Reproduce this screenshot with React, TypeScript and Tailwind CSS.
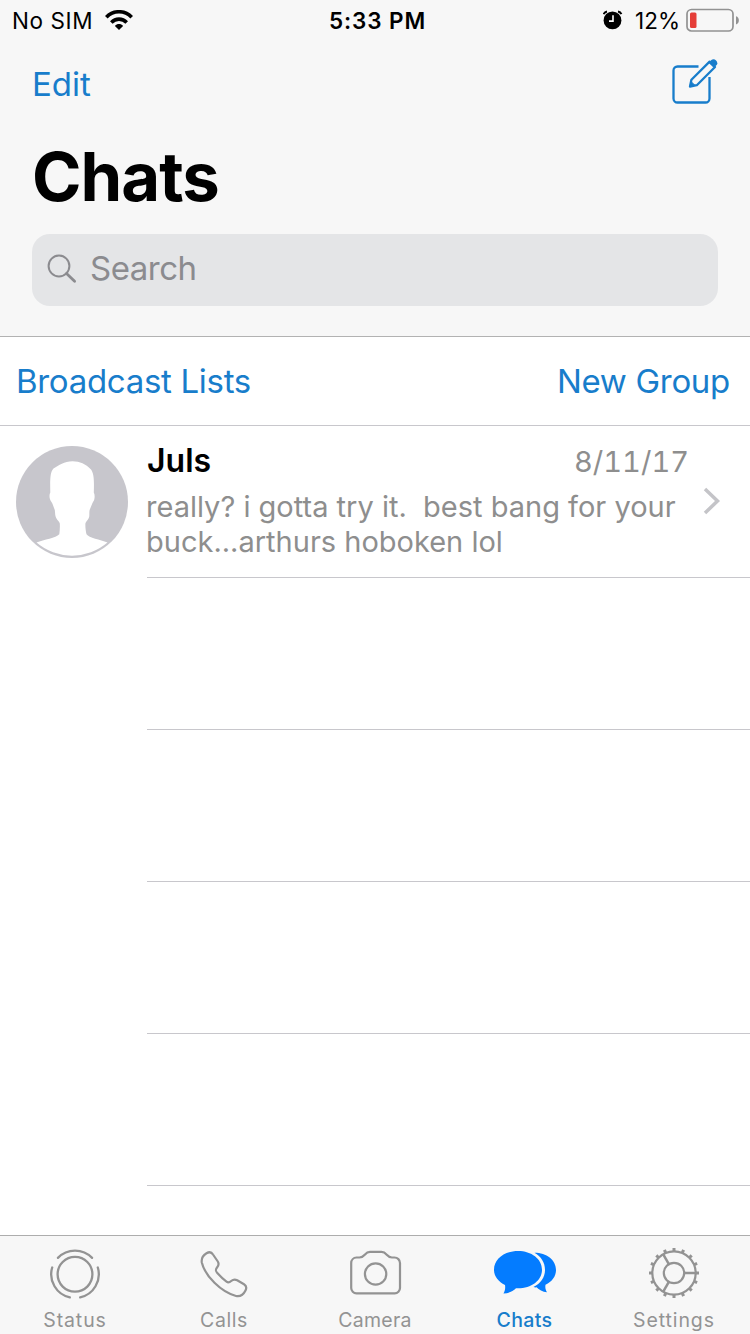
import type { ReactNode } from "react";

const WifiIcon = () => (
    <svg className="w-7 h-5 -mt-px" viewBox="0 0 28 20" fill="none" stroke="black" strokeWidth="3.6">
        <path d="M1.3 7.2C8.3 -0.1 19.7 -0.1 26.7 7.2" />
        <path d="M6.3 12.4C10.6 8 17.4 8 21.7 12.4" />
        <path d="M9.9 15.9C12.2 13.5 15.8 13.5 18.1 15.9L14 20Z" fill="black" stroke="none" />
    </svg>
);

const AlarmIcon = () => (
    <svg className="w-5 h-5 -mt-px" viewBox="0 0 20 20" fill="none">
        <circle cx="9.5" cy="10.4" r="8.9" fill="black" />
        <path d="M10 5.3V11.1H6" stroke="white" strokeWidth="1.6" />
        <path d="M0.6 4.2C1.2 2.8 2.5 1.8 4 1.5M18.4 4.2C17.8 2.8 16.5 1.8 15 1.5" stroke="black" strokeWidth="2" />
    </svg>
);

const BatteryIcon = () => (
    <svg className="w-[54px] h-6 -mt-0.5" viewBox="0 0 54 24" fill="none">
        <rect x="1" y="1.5" width="46" height="21.5" rx="4.5" stroke="#929292" strokeWidth="1.7" />
        <rect x="4" y="4.5" width="6.5" height="15.5" rx="1.5" fill="#e53e38" />
        <path d="M50 8.3C53.8 9.3 53.8 15.5 50 16.5Z" fill="#929292" />
    </svg>
);

const ComposeIcon = () => (
    <svg className="w-[46px] h-[46px]" viewBox="0 0 46 46" fill="none" stroke="#187dcb" strokeWidth="2.3">
        <path d="M26.5 8.5H5.5A4 4 0 0 0 1.5 12.5V40.5A4 4 0 0 0 5.5 44.5H33.5A4 4 0 0 0 37.5 40.5V19" />
        <path d="M18 28.5L19.4 21.8L37.6 3.6L43 9L24.8 27.2Z" strokeLinejoin="round" />
        <path d="M18 28.5L19 23.5L23 27.4Z" fill="#187dcb" strokeWidth="1" />
        <path d="M36.6 4.8L39.4 2C42.3 -0.8 47.2 4.2 44.6 7L41.8 9.8Z" fill="#187dcb" stroke="none" />
    </svg>
);

const SearchIcon = () => (
    <svg className="w-[30px] h-[30px]" viewBox="0 0 30 30" fill="none" stroke="#8b8b8f">
        <circle cx="12" cy="12" r="10.4" strokeWidth="2" />
        <path d="M19.5 19.5L27.6 27.3" strokeWidth="2.8" strokeLinecap="round" />
    </svg>
);

const Avatar = () => (
    <svg className="w-28 h-28 shrink-0" viewBox="0 0 112 112">
        <circle cx="56" cy="56" r="56" fill="#c7c6cc" />
        <path
            d="M56.5 15.3C48 15.3 43 19.5 37.5 22.5C34 26 34 34 34.300 46.5C32.800 49 33.500 54 35.500 56C37 58 37.500 61 38.800 64C39.200 67 39 70 40.200 72C41.500 74.500 43.500 75.500 43.800 77.500C44 81 43.800 85 43.300 88.300C40 92 28 93.500 20.500 96.600A54.700 54.700 0 0 0 91.500 96.600C84 93.500 73 92 70.500 88.300C69.800 85 69.200 81 69.400 77.500C69.800 75.500 71.500 74.500 72.800 72C73.800 70 73 67 73.600 64C75 61 75.800 58 77 56C78.800 54 79.200 49 77.800 46.500C78.200 34 78 28 75 23.500C69.500 18 64 15.300 56.500 15.300Z"
            fill="white"
        />
    </svg>
);

const StatusIcon = () => (
    <svg className="w-[52px] h-[52px]" viewBox="0 0 52 52" fill="none" stroke="currentColor" strokeWidth="2.3" strokeLinecap="round">
        <circle cx="26" cy="26.3" r="17.4" />
        <path d="M8.9 9.9A23.7 23.7 0 0 1 43.1 9.9" />
        <path d="M3.2 19.5A23.7 23.7 0 0 0 20.8 49.4" />
        <path d="M48.8 19.5A23.7 23.7 0 0 1 31.2 49.4" />
    </svg>
);

const CallsIcon = () => (
    <svg className="w-12 h-12 mr-[3px]" viewBox="0 0 48 48" fill="none" stroke="currentColor" strokeWidth="2.2" strokeLinejoin="round">
        <path d="M6.5 3.3C9.5 1.5 11.5 2 13 4.5L17.8 11.5C19.2 13.8 18.8 15.3 17.2 17.2C15.2 19.7 15.4 20.9 17.3 23C20.4 26.5 23 29 26.5 31.6C28.3 32.9 29.5 32.5 31.2 31C33.2 29.3 35 29.1 37.2 30.3L44 34.3C46.5 35.8 47 37.5 45.5 40.5C43.5 44.5 40.5 46.9 36 46C21 42 5 26 1.8 12.5C1.2 8.5 2.8 5.5 6.5 3.3Z" />
    </svg>
);

const CameraIcon = () => (
    <svg className="w-[52px] h-[46px] ml-0.5 mb-0.5" viewBox="0 0 52 46" fill="none" stroke="currentColor" strokeWidth="2.2">
        <path d="M6.5 7.5H9.5C15 7.5 14.5 1.8 20 1.8H31.5C37 1.8 36.5 7.5 42 7.5H44.5A5.5 5.5 0 0 1 50 13V38A5.3 5.3 0 0 1 44.7 43.3H6.5A5.3 5.3 0 0 1 1.2 38V13A5.5 5.5 0 0 1 6.5 7.5Z" />
        <circle cx="25.6" cy="24" r="10.7" />
    </svg>
);

const ChatsIcon = () => (
    <svg className="w-16 h-[46px] mb-[3px]" viewBox="0 0 64 46" fill="#047cff">
        <path d="M25 2C38.5 2 49 10 49 20.7C49 31.5 38.5 39.3 25 39.3H23C20 42.5 15.5 44.3 10.5 44.5C12 42 12.5 39 12 36C5.5 32.8 1 27.5 1 20.7C1 10 11.5 2 25 2Z" />
        <path d="M41.5 3.8C53.5 3.8 63 11 63 21C63 27.5 59 32.5 52.5 35.8C52 38.5 52.5 41 54 43.3C49.5 42.8 46 41 43.5 38.3C42.5 38.5 41.5 38.3 40.5 38C47.5 34.5 52 28.5 52 21C52 13.5 48 7.5 41.5 3.8Z" />
    </svg>
);

const TEETH = Array.from({ length: 16 }, (_, i) => i * 22.5);
const SPOKES = [0, 120, 240];

const SettingsIcon = () => (
    <svg className="w-[52px] h-[52px] mr-0.5 mb-0.5" viewBox="0 0 52 52" fill="none" stroke="currentColor" strokeWidth="2.2">
        <circle cx="26" cy="26" r="21.7" />
        <circle cx="26" cy="26" r="10.2" />
        {SPOKES.map((deg) => (
            <path key={deg} d="M36 26H47.5" strokeWidth="2.5" transform={`rotate(${deg} 26 26)`} />
        ))}
        {TEETH.map((deg) => (
            <path key={deg} d="M48 26H51" strokeWidth="3" transform={`rotate(${deg} 26 26)`} />
        ))}
    </svg>
);

interface TabProps {
    label: string;
    labelClass: string;
    icon: ReactNode;
}

const tabs: TabProps[] = [
    { label: "Status", labelClass: "tracking-[0.9px]", icon: <StatusIcon /> },
    { label: "Calls", labelClass: "tracking-[0.6px] mr-0.5", icon: <CallsIcon /> },
    { label: "Camera", labelClass: "tracking-[0.3px]", icon: <CameraIcon /> },
    { label: "Chats", labelClass: "tracking-[0.4px] mr-px font-medium text-[#187dcb]", icon: <ChatsIcon /> },
    { label: "Settings", labelClass: "tracking-[0.9px] mr-0.5", icon: <SettingsIcon /> },
];

const Tab = ({ label, labelClass, icon }: TabProps) => (
    <button className="flex flex-col items-center text-[#939393]">
        <div className="h-[72px] flex items-center justify-center pt-[3px]">{icon}</div>
        <span className={`text-[19.5px] leading-6 whitespace-nowrap ${labelClass}`}>{label}</span>
    </button>
);

const StatusBar = () => (
    <div className="h-10 grid grid-cols-3 items-center pt-px text-[22.5px] text-black">
        <div className="flex items-center gap-3 pl-3">
            <span className="tracking-[0.6px]">No SIM</span>
            <WifiIcon />
        </div>
        <div className="text-center font-semibold tracking-[0.9px] pl-[5px]">5:33 PM</div>
        <div className="flex items-center justify-end pr-2.5">
            <AlarmIcon />
            <span className="ml-3 mr-1.5">12%</span>
            <BatteryIcon />
        </div>
    </div>
);

const App = () => {
    return (
        <div className="w-[750px] h-[1334px] flex flex-col bg-white overflow-hidden font-['Inter',sans-serif]">
            {/* Header */}
            <header className="h-[337px] shrink-0 bg-[#f7f7f7] border-b border-[#b2b2b2]">
                <StatusBar />
                <div className="h-[88px] flex items-center justify-between px-8">
                    <button className="pt-0.5 text-[33px] text-[#187dcb]">Edit</button>
                    <button className="pb-1.5">
                        <ComposeIcon />
                    </button>
                </div>
                <h1 className="h-[106px] pl-8 pt-1.5 text-[67px] leading-[86px] font-bold tracking-[-1px] text-black">Chats</h1>
                <div className="mx-8 h-[72px] rounded-[18px] bg-[#e4e5e7] flex items-center pb-0.5 pl-[15px] gap-[13px] text-[33px] text-[#8b8b8f]">
                    <SearchIcon />
                    <span className="tracking-[-0.5px]">Search</span>
                </div>
            </header>

            {/* Actions */}
            <div className="h-[89px] shrink-0 flex items-center justify-between pt-0.5 pl-4 pr-5 border-b border-[#c8c7cc] text-[33px] tracking-[-0.3px] text-[#187dcb]">
                <button>Broadcast Lists</button>
                <button>New Group</button>
            </div>

            {/* Chat list */}
            <main className="flex-1 overflow-hidden">
                <div className="h-[152px] flex pl-4">
                    <div className="w-[131px] pt-5 shrink-0">
                        <Avatar />
                    </div>
                    <div className="flex-1 flex border-b border-[#c8c7cc]">
                        <div className="w-[543px] pt-3.5">
                            <div className="flex justify-between items-center h-[42px]">
                                <span className="text-[32px] font-semibold text-black">Juls</span>
                                <span className="pt-0.5 pr-px text-[29px] text-[#8e8e8e] tabular-nums">8/11/17</span>
                            </div>
                            <p className="mt-[7px] -ml-px text-[29px] leading-[35px] text-[#8e8e8e] whitespace-pre">
                                {"really? i gotta try it.  best bang for your\nbuck...arthurs hoboken lol"}
                            </p>
                        </div>
                        <svg className="w-5 h-7 mt-[61px] ml-3" viewBox="0 0 20 28" fill="none" stroke="#c4c4c8" strokeWidth="3.5">
                            <path d="M3 2L15.5 14L3 26" />
                        </svg>
                    </div>
                </div>
                {[1, 2, 3, 4].map((row) => (
                    <div key={row} className="h-[152px] ml-[147px] border-b border-[#c8c7cc]" />
                ))}
            </main>

            {/* Tab bar */}
            <nav className="h-[99px] shrink-0 grid grid-cols-5 bg-[#f7f7f7] border-t border-[#adadad]">
                {tabs.map((tab) => (
                    <Tab key={tab.label} {...tab} />
                ))}
            </nav>
        </div>
    );
};

export default App;
